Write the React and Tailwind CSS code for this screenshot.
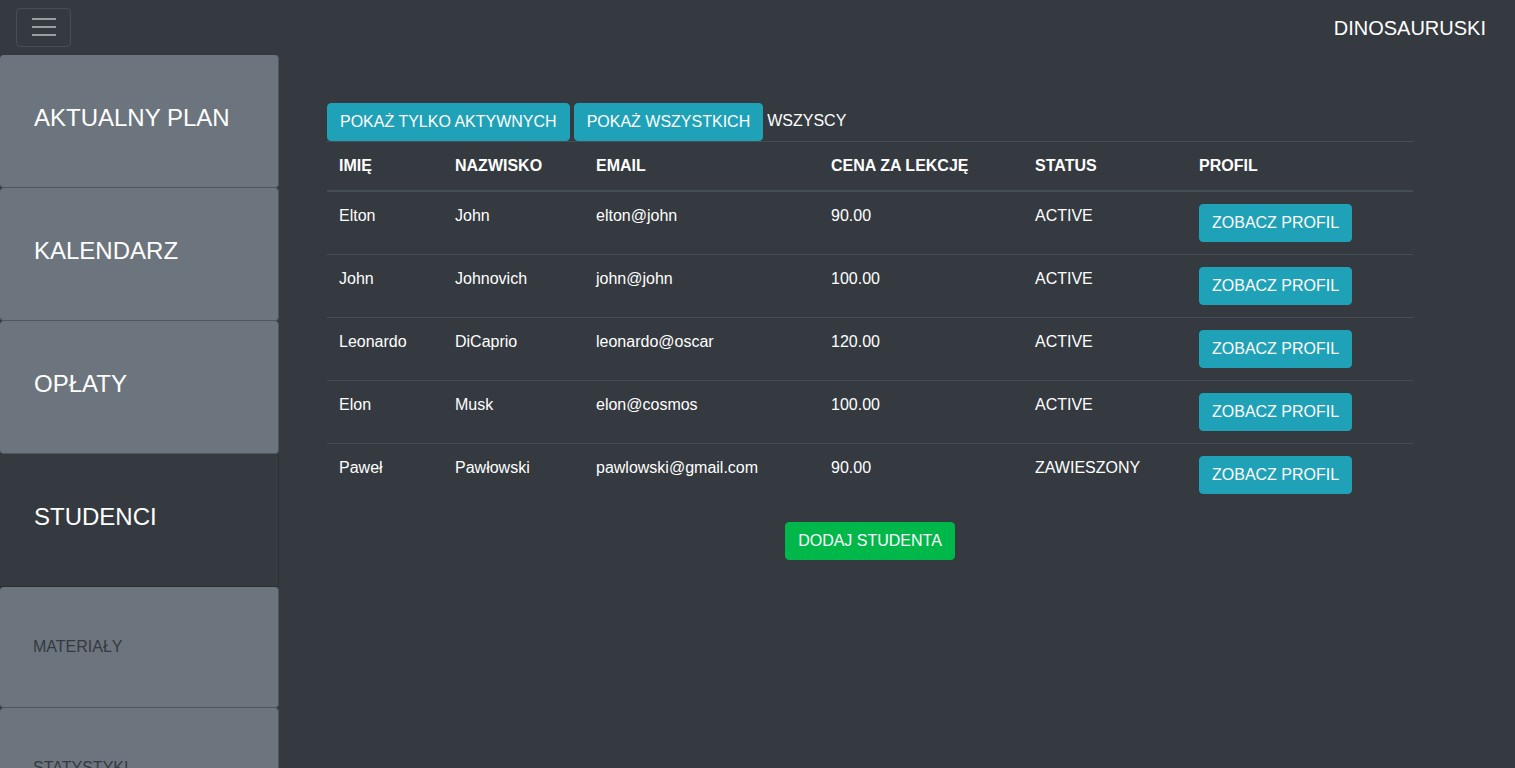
import React from 'react';

const students = [
  { first: 'Elton', last: 'John', email: 'elton@john', price: '90.00', status: 'ACTIVE' },
  { first: 'John', last: 'Johnovich', email: 'john@john', price: '100.00', status: 'ACTIVE' },
  { first: 'Leonardo', last: 'DiCaprio', email: 'leonardo@oscar', price: '120.00', status: 'ACTIVE' },
  { first: 'Elon', last: 'Musk', email: 'elon@cosmos', price: '100.00', status: 'ACTIVE' },
  { first: 'Paweł', last: 'Pawłowski', email: 'pawlowski@gmail.com', price: '90.00', status: 'ZAWIESZONY' },
];

const menu = [
  { label: 'AKTUALNY PLAN', big: true },
  { label: 'KALENDARZ', big: true },
  { label: 'OPŁATY', big: true },
  { label: 'STUDENCI', big: true, active: true },
  { label: 'MATERIAŁY' },
  { label: 'STATYSTYKI' },
];

export default function App() {
  return (
    <div className="min-h-screen bg-[#343a40] text-white font-['Liberation_Sans',Arial,sans-serif]">
      {/* Navbar */}
      <nav className="h-[55px] flex items-center justify-between pl-4 pr-[29px]">
        <button className="w-[55px] h-[39px] -mt-[1px] border border-white/10 rounded-[4px] flex flex-col items-center justify-center gap-[6px]">
          <span className="block w-[24px] h-[2px] bg-white/50" />
          <span className="block w-[24px] h-[2px] bg-white/50" />
          <span className="block w-[24px] h-[2px] bg-white/50" />
        </button>
        <span className="text-[20px] leading-[30px]">DINOSAURUSKI</span>
      </nav>

      <div className="flex">
        {/* Sidebar */}
        <aside className="w-[279px] shrink-0 flex flex-col">
          {menu.map((m) => (
            <div
              key={m.label}
              className={
                m.active
                  ? 'h-[133px] bg-[#343a40] border-r border-b border-[#2b3035] px-[34px] pt-[48px] text-white text-[24px] leading-[29px]'
                  : m.big
                  ? 'h-[133px] bg-[#6c757d] border-r border-b border-[#50575e] rounded-[4px] px-[34px] pt-[48px] text-white text-[24px] leading-[29px]'
                  : 'h-[121px] shrink-0 bg-[#6c757d] border-r border-b border-[#50575e] rounded-[4px] px-[33px] pt-[48px] text-[#343a40] text-[16px] leading-[24px]'
              }
            >
              {m.label}
            </div>
          ))}
        </aside>

        {/* Main content */}
        <main className="flex-1 pl-[48px] pt-[48px]">
          <div className="w-[1086px]">
            <div className="flex items-center">
              <button className="bg-[#1fa2b8] border border-[#1fa2b8] rounded-[4px] px-[12px] py-[6px] text-[16px] leading-[24px]">
                POKAŻ TYLKO AKTYWNYCH
              </button>
              <button className="ml-[4px] bg-[#1fa2b8] border border-[#1fa2b8] rounded-[4px] px-[12px] py-[6px] text-[16px] leading-[24px]">
                POKAŻ WSZYSTKICH
              </button>
              <span className="ml-[4px] text-[16px] leading-[24px] -mt-[3px]">WSZYSCY</span>
            </div>

            <table className="w-full text-[16px] leading-[24px] text-left">
              <thead>
                <tr>
                  <th className="w-[116px] px-[12px] py-[12px] border-t border-b-2 border-[#454d55] font-bold">IMIĘ</th>
                  <th className="w-[141px] px-[12px] py-[12px] border-t border-b-2 border-[#454d55] font-bold">NAZWISKO</th>
                  <th className="w-[235px] px-[12px] py-[12px] border-t border-b-2 border-[#454d55] font-bold">EMAIL</th>
                  <th className="w-[204px] px-[12px] py-[12px] border-t border-b-2 border-[#454d55] font-bold">CENA ZA LEKCJĘ</th>
                  <th className="w-[164px] px-[12px] py-[12px] border-t border-b-2 border-[#454d55] font-bold">STATUS</th>
                  <th className="px-[12px] py-[12px] border-t border-b-2 border-[#454d55] font-bold">PROFIL</th>
                </tr>
              </thead>
              <tbody>
                {students.map((s, i) => (
                  <tr key={s.email} className={i > 0 ? 'border-t border-[#454d55]' : ''}>
                    <td className="px-[12px] py-[12px] align-top">{s.first}</td>
                    <td className="px-[12px] py-[12px] align-top">{s.last}</td>
                    <td className="px-[12px] py-[12px] align-top">{s.email}</td>
                    <td className="px-[12px] py-[12px] align-top">{s.price}</td>
                    <td className="px-[12px] py-[12px] align-top">{s.status}</td>
                    <td className="px-[12px] py-[12px] align-top">
                      <button className="bg-[#1fa2b8] border border-[#1fa2b8] rounded-[4px] px-[12px] py-[6px] text-[16px] leading-[24px]">
                        ZOBACZ PROFIL
                      </button>
                    </td>
                  </tr>
                ))}
              </tbody>
            </table>

            <div className="flex justify-center mt-[16px]">
              <button className="bg-[#00b74a] border border-[#00b74a] rounded-[4px] px-[12px] py-[6px] text-[16px] leading-[24px]">
                DODAJ STUDENTA
              </button>
            </div>
          </div>
        </main>
      </div>
    </div>
  );
}
